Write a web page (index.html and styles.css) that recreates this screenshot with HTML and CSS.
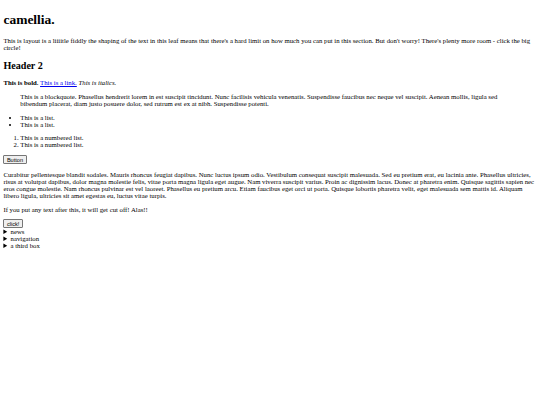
FILE: index.html
```html
<!DOCTYPE html>
<html>
<head>
<meta charset="utf-8">
<link rel="stylesheet" href="styles.css">
</head>
<body class="doc">
<h1 class="title">camellia.</h1>
<p class="para">This is layout is a liiiitle fiddly the shaping of the text in this leaf means that there's a hard limit on how much you can put in this section. But don't worry! There's plenty more room - click the big circle!</p>
<h2 class="sub">Header 2</h2>
<p class="para"><b>This is bold.</b> <a class="link" href="#">This is a link.</a> <i>This is italics.</i></p>
<blockquote class="quote">This is a blockquote. Phasellus hendrerit lorem in est suscipit tincidunt. Nunc facilisis vehicula venenatis. Suspendisse faucibus nec neque vel suscipit. Aenean mollis, ligula sed bibendum placerat, diam justo posuere dolor, sed rutrum est ex at nibh. Suspendisse potenti.</blockquote>
<ul class="list">
<li>This is a list.</li>
<li>This is a list.</li>
</ul>
<ol class="list">
<li>This is a numbered list.</li>
<li>This is a numbered list.</li>
</ol>
<button class="btn">Button</button>
<p class="para">Curabitur pellentesque blandit sodales. Mauris rhoncus feugiat dapibus. Nunc luctus ipsum odio. Vestibulum consequat suscipit malesuada. Sed eu pretium erat, eu lacinia ante. Phasellus ultricies, risus at volutpat dapibus, dolor magna molestie felis, vitae porta magna ligula eget augue. Nam viverra suscipit varius. Proin ac dignissim lacus. Donec at pharetra enim. Quisque sagittis sapien nec eros congue molestie. Nam rhoncus pulvinar est vel laoreet. Phasellus eu pretium arcu. Etiam faucibus eget orci ut porta. Quisque lobortis pharetra velit, eget malesuada sem mattis id. Aliquam libero ligula, ultricies sit amet egestas eu, luctus vitae turpis.</p>
<p class="para">If you put any text after this, it will get cut off! Alas!!</p>
<button class="btn">click!</button>
<details class="box"><summary class="sum">news</summary><p class="para">News content</p></details>
<details class="box"><summary class="sum">navigation</summary><p class="para">Navigation content</p></details>
<details class="box"><summary class="sum">a third box</summary><p class="para">More content</p></details>
</body>
</html>
```
FILE: styles.css
```css
.doc {
  margin: 3.4px;
  font-family: "Liberation Serif", "Times New Roman", serif;
  font-size: 6.75px;
  color: #000;
  background: #fff;
}
.title {
  font-size: 13.5px;
  margin: 9px 0;
}
.sub {
  font-size: 10.1px;
  margin: 8.4px 0;
}
.para {
  margin: 6.75px 0;
}
.link {
  color: #0000ee;
}
.quote {
  margin: 6.75px 16.9px;
}
.list {
  margin: 6.75px 0;
  padding-left: 16.9px;
}
.btn {
  font-family: "Liberation Sans", Arial, sans-serif;
  font-size: 5.6px;
  padding: 0.5px 2.5px;
  border: 1px solid #767676;
  border-radius: 1px;
  background: #efefef;
  color: #000;
}
.box {
  display: block;
}
.sum {
  display: list-item;
}
```
